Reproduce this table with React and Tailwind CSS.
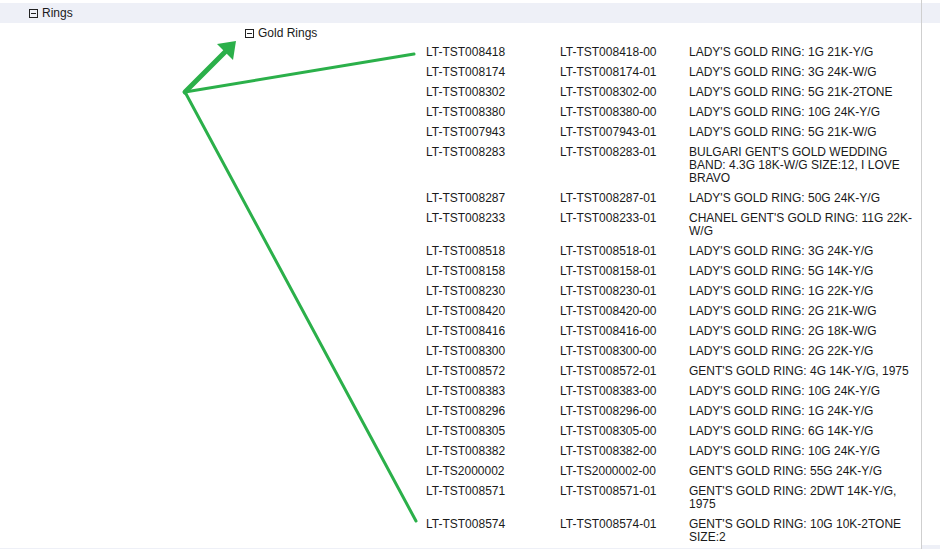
import React from "react";

const rows = [
  ["LT-TST008418", "LT-TST008418-00", "LADY'S GOLD RING: 1G 21K-Y/G"],
  ["LT-TST008174", "LT-TST008174-01", "LADY'S GOLD RING: 3G 24K-W/G"],
  ["LT-TST008302", "LT-TST008302-00", "LADY'S GOLD RING: 5G 21K-2TONE"],
  ["LT-TST008380", "LT-TST008380-00", "LADY'S GOLD RING: 10G 24K-Y/G"],
  ["LT-TST007943", "LT-TST007943-01", "LADY'S GOLD RING: 5G 21K-W/G"],
  ["LT-TST008283", "LT-TST008283-01", "BULGARI GENT'S GOLD WEDDING BAND: 4.3G 18K-W/G SIZE:12, I LOVE BRAVO"],
  ["LT-TST008287", "LT-TST008287-01", "LADY'S GOLD RING: 50G 24K-Y/G"],
  ["LT-TST008233", "LT-TST008233-01", "CHANEL GENT'S GOLD RING: 11G 22K-W/G"],
  ["LT-TST008518", "LT-TST008518-01", "LADY'S GOLD RING: 3G 24K-Y/G"],
  ["LT-TST008158", "LT-TST008158-01", "LADY'S GOLD RING: 5G 14K-Y/G"],
  ["LT-TST008230", "LT-TST008230-01", "LADY'S GOLD RING: 1G 22K-Y/G"],
  ["LT-TST008420", "LT-TST008420-00", "LADY'S GOLD RING: 2G 21K-W/G"],
  ["LT-TST008416", "LT-TST008416-00", "LADY'S GOLD RING: 2G 18K-W/G"],
  ["LT-TST008300", "LT-TST008300-00", "LADY'S GOLD RING: 2G 22K-Y/G"],
  ["LT-TST008572", "LT-TST008572-01", "GENT'S GOLD RING: 4G 14K-Y/G, 1975"],
  ["LT-TST008383", "LT-TST008383-00", "LADY'S GOLD RING: 10G 24K-Y/G"],
  ["LT-TST008296", "LT-TST008296-00", "LADY'S GOLD RING: 1G 24K-Y/G"],
  ["LT-TST008305", "LT-TST008305-00", "LADY'S GOLD RING: 6G 14K-Y/G"],
  ["LT-TST008382", "LT-TST008382-00", "LADY'S GOLD RING: 10G 24K-Y/G"],
  ["LT-TS2000002", "LT-TS2000002-00", "GENT'S GOLD RING: 55G 24K-Y/G"],
  ["LT-TST008571", "LT-TST008571-01", "GENT'S GOLD RING: 2DWT 14K-Y/G, 1975"],
  ["LT-TST008574", "LT-TST008574-01", "GENT'S GOLD RING: 10G 10K-2TONE SIZE:2"],
];

function MinusBox() {
  return (
    <svg width="9" height="9" viewBox="0 0 9 9" className="shrink-0">
      <rect x="0.5" y="0.5" width="8" height="8" fill="none" stroke="#222" strokeWidth="1" />
      <line x1="2" y1="4.5" x2="7" y2="4.5" stroke="#222" strokeWidth="1" />
    </svg>
  );
}

export default function App() {
  return (
    <div
      className="relative flex w-[940px] h-[549px] bg-white overflow-hidden text-[12px] text-[#1a1a1a]"
      style={{ fontFamily: '"Liberation Sans", Arial, sans-serif' }}
    >
      <div className="flex flex-col w-[921px]">
        <div className="mt-[3px] h-[20px] bg-[#eef0f7] flex items-center pl-[29px] gap-[4px] shrink-0">
          <MinusBox />
          <span>Rings</span>
        </div>
        <div className="flex items-center pl-[245px] gap-[4px] h-[20px] shrink-0">
          <MinusBox />
          <span>Gold Rings</span>
        </div>
        <div className="flex-1 pl-[420px]">
          <table className="border-collapse">
            <tbody>
              {rows.map((r, i) => (
                <tr key={i} className="align-top">
                  <td className="w-[134px] px-[6px] pt-[3px] pb-[4px] leading-[13px]">{r[0]}</td>
                  <td className="w-[129px] px-[6px] pt-[3px] pb-[4px] leading-[13px]">{r[1]}</td>
                  <td className="w-[238px] px-[6px] pt-[3px] pb-[4px] leading-[13px]">{r[2]}</td>
                </tr>
              ))}
            </tbody>
          </table>
        </div>
        <div className="h-[4px] bg-[#eef0f7] shrink-0" />
      </div>
      <div className="flex flex-col flex-1 border-l border-[#cfcfcf]">
        <div className="mt-[3px] h-[20px] bg-[#eef0f7] shrink-0" />
        <div className="flex-1" />
        <div className="h-[4px] bg-[#eef0f7] shrink-0" />
      </div>
      <svg className="absolute left-0 top-0 pointer-events-none" width="940" height="549">
        <g stroke="#2bb04a" strokeWidth="3" fill="none" strokeLinecap="round">
          <line x1="185" y1="92" x2="414" y2="54" />
          <line x1="185" y1="92" x2="416" y2="521" />
        </g>
        <line x1="185" y1="92" x2="226" y2="51" stroke="#2bb04a" strokeWidth="5" strokeLinecap="round" />
        <polygon points="236,41 217,44 233,60" fill="#2bb04a" />
      </svg>
    </div>
  );
}
